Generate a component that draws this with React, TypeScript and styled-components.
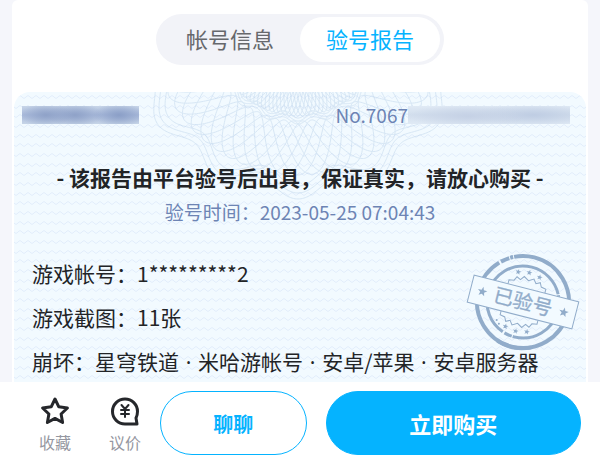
import React from "react";
import styled, { createGlobalStyle } from "styled-components";

const GlobalStyle = createGlobalStyle`
  *, *::before, *::after { box-sizing: border-box; }
  body {
    margin: 0;
    background: #f5f6fb;
    color: #222427;
    font-family: "Noto Sans CJK SC", sans-serif;
  }
  button { font-family: inherit; cursor: pointer; }
`;

const Page = styled.div`
  min-height: 100vh;
  display: flex;
  flex-direction: column;
`;

const Panel = styled.main`
  flex: 1;
  display: flex;
  flex-direction: column;
  margin: 0 12px;
  padding: 14px 2px 0;
  background: #fff;
  border-radius: 6px 6px 0 0;
`;

const Tabs = styled.div`
  align-self: center;
  display: flex;
  padding: 3px 4px;
  border-radius: 26px;
  background: #f2f3f8;
`;

const Tab = styled.button<{ $active?: boolean }>`
  height: 45px;
  padding: 0 26px 4px;
  border: 0;
  border-radius: 23px;
  font-size: 22px;
  line-height: 32px;
  background: ${(p) => (p.$active ? "#fff" : "transparent")};
  color: ${(p) => (p.$active ? "#05b3ff" : "#66686c")};
`;

const Report = styled.section`
  position: relative;
  flex: 1;
  margin-top: 27px;
  padding: 8px 8px 4px;
  border-radius: 16px 16px 0 0;
  background: #f2faff;
  overflow: hidden;
`;

const Waves = styled.svg`
  position: absolute;
  inset: 0;
  width: 100%;
  height: 100%;
`;

const Rosette = styled.svg`
  position: absolute;
  top: 0;
  left: 50%;
  width: 320px;
  height: 110px;
  transform: translateX(-50%);
`;

const Content = styled.div`
  position: relative;
`;

const Serial = styled.div`
  display: flex;
  align-items: center;
  justify-content: space-between;
  padding-right: 8px;
  height: 30px;
  font-size: 19px;
  line-height: 30px;
  color: #6d84b4;
`;

const SerialNumber = styled.div`
  display: flex;
  align-items: center;
`;

const Mask = styled.span<{ $strong?: boolean }>`
  width: ${(p) => (p.$strong ? 117 : 162)}px;
  height: 18px;
  background: ${(p) =>
    p.$strong
      ? `radial-gradient(ellipse 26px 12px at 24px 9px, #8fa2c8, transparent),
         radial-gradient(ellipse 28px 12px at 53px 9px, #8fa2c8, transparent),
         radial-gradient(ellipse 26px 12px at 97px 9px, #8b9fc7, transparent),
         linear-gradient(#c7d5e8, #a9badb 50%, #c7d5e8)`
      : `radial-gradient(ellipse 60px 12px at 60px 10px, #c5d1e5, transparent),
         radial-gradient(ellipse 60px 12px at 125px 9px, #bfcde3, transparent),
         linear-gradient(#e0eaf5, #d2deed 50%, #e0eaf5)`};
`;

const Title = styled.h1`
  margin: 32px 0 0;
  font-size: 21px;
  line-height: 30px;
  font-weight: 700;
  text-align: center;
`;

const CheckedAt = styled.p`
  margin: 5px 0 0;
  font-size: 19px;
  line-height: 30px;
  text-align: center;
  color: #6d84b4;
`;

const Facts = styled.dl`
  display: flex;
  flex-direction: column;
  gap: 12px;
  margin: 30px 0 0;
  padding: 0 10px;
`;

const Fact = styled.div`
  display: flex;
  font-size: 21px;
  line-height: 32px;
  white-space: nowrap;
  dt, dd { margin: 0; }
`;

const Dot = styled.span`
  padding: 0 2px;
  font-family: "Noto Sans", sans-serif;
  line-height: 1;
`;

const Stamp = styled.svg`
  position: absolute;
  top: 157px;
  right: 3px;
  width: 120px;
  height: 106px;
`;

const Bar = styled.footer`
  position: sticky;
  bottom: 0;
  display: flex;
  align-items: center;
  padding: 9px 19px 7px 20px;
  background: #fff;
`;

const Tool = styled.button`
  display: flex;
  flex-direction: column;
  align-items: center;
  gap: 4px;
  width: 70px;
  padding: 4px 0 0;
  border: 0;
  background: transparent;
  color: #9597a1;
  font-size: 16px;
  line-height: 24px;
  svg { display: block; color: #25272b; }
`;

const Action = styled.button<{ $primary?: boolean }>`
  flex: ${(p) => (p.$primary ? 256 : 146)} 1 0;
  height: 64px;
  margin-left: ${(p) => (p.$primary ? 19 : 0)}px;
  padding: 0;
  border: 1px solid #05b3ff;
  border-radius: 32px;
  font-size: ${(p) => (p.$primary ? 22 : 20)}px;
  font-weight: 700;
  background: ${(p) => (p.$primary ? "#05b3ff" : "#fff")};
  color: ${(p) => (p.$primary ? "#fff" : "#05b3ff")};
`;

/* Polar curve r = radius + amp * cos(freq * t + phase), t measured from straight down. */
function polar(radius: number, amp: number, freq: number, phase = 0) {
  const points: string[] = [];
  for (let deg = -80; deg <= 80; deg += 0.5) {
    const t = (deg * Math.PI) / 180;
    const r = radius + amp * Math.cos(freq * t + phase);
    points.push(`${(158 + r * Math.sin(t)).toFixed(1)} ${(-62 + r * Math.cos(t)).toFixed(1)}`);
  }
  return "M" + points.join("L");
}

const range = (n: number) => Array.from({ length: n }, (_, i) => i);
const rosettePaths = [
  ...[161, 155, 148].map((r) => polar(r, 8, 12.8)),
  ...[91, 88, 85].map((r) => polar(r, 3, 19)),
  ...range(7).map((i) => polar(118, 27, 9, (i * 2 * Math.PI) / 7)),
  ...range(8).map((i) => polar(68, 18, 15, (i * 2 * Math.PI) / 8)),
];

function star(cx: number, cy: number, outer: number, inner = outer * 0.42) {
  return (
    range(10)
      .map((i) => {
        const r = i % 2 ? inner : outer;
        const a = (i * Math.PI) / 5;
        return `${i ? "L" : "M"}${(cx + r * Math.sin(a)).toFixed(1)} ${(cy - r * Math.cos(a)).toFixed(1)}`;
      })
      .join("") + "Z"
  );
}

function VerifiedStamp() {
  return (
    <Stamp viewBox="0 0 120 106" role="img" aria-label="已验号">
      <g transform="rotate(14.3 60 53)" fill="none" stroke="#91acca">
        <circle cx="60" cy="53" r="46" strokeWidth="4" strokeDasharray="180 2 9 1 3 1 93" />
        <path d="M45 97Q62 103 79 95" strokeWidth="4" />
        <circle cx="60" cy="53" r="36" strokeWidth="3" strokeDasharray="58 1 8 2 140 1 16" />
        <path
          d="M41 39v-4l5-1 2-4 4 2 3-4 5 3 5-3 3 4 4-2 2 4 5 1v4M41 67v4l5 1 2 4 4-2 3 4 5-3 5 3 3-4 4 2 2-4 5-1v-4"
          strokeWidth="1"
        />
        <g fill="#91acca" stroke="none">
          <path d={star(48, 25, 3)} />
          <path d={star(59, 23, 3)} />
          <path d={star(70, 25, 3)} />
          <path d={star(49, 81, 3)} />
          <path d={star(60, 83, 3)} />
          <path d={star(71, 81, 3)} />
          <circle cx="39" cy="77" r="1" />
          <circle cx="42" cy="80" r="1" />
        </g>
        <path d="M6 39h108v28H6z" fill="#f2faff" strokeWidth="1" />
        <g fill="#91acca" stroke="none">
          <path d={star(18, 53, 5)} />
          <path d={star(102, 53, 5)} />
          <text x="60" y="60" textAnchor="middle" fontSize="20" fontWeight="400" stroke="#91acca" strokeWidth="0.3">
            已验号
          </text>
        </g>
      </g>
    </Stamp>
  );
}

const facts = [
  { label: "游戏帐号：", values: ["1*********2"] },
  { label: "游戏截图：", values: ["11张"] },
  { label: "崩坏：", values: ["星穹铁道", "米哈游帐号", "安卓/苹果", "安卓服务器"] },
];

export default function App() {
  return (
    <Page>
      <GlobalStyle />
      <Panel>
        <Tabs role="tablist">
          <Tab role="tab" aria-selected={false}>帐号信息</Tab>
          <Tab role="tab" aria-selected $active>验号报告</Tab>
        </Tabs>
        <Report>
          <Waves aria-hidden="true">
            <defs>
              <pattern id="waves" width="8" height="29" patternUnits="userSpaceOnUse">
                <path
                  d="M-4 5q2 -3 4 0t4 0t4 0t4 0M-4 15q2 -3 4 0t4 0t4 0t4 0M-4 24q2 -3 4 0t4 0t4 0t4 0"
                  fill="none"
                  stroke="#e2edfb"
                  strokeWidth="1"
                />
              </pattern>
            </defs>
            <rect width="100%" height="100%" fill="url(#waves)" />
          </Waves>
          <Rosette viewBox="0 0 320 110" aria-hidden="true">
            <g fill="none" stroke="#a9c6e4" strokeWidth="1" opacity="0.36">
              {rosettePaths.map((d) => (
                <path key={d} d={d} />
              ))}
            </g>
          </Rosette>
          <VerifiedStamp />
          <Content>
            <Serial>
              <Mask $strong />
              <SerialNumber>
                No.7067
                <Mask />
              </SerialNumber>
            </Serial>
            <Title>- 该报告由平台验号后出具，保证真实，请放心购买 -</Title>
            <CheckedAt>验号时间：2023-05-25 07:04:43</CheckedAt>
            <Facts>
              {facts.map(({ label, values }) => (
                <Fact key={label}>
                  <dt>{label}</dt>
                  <dd>
                    {values.map((value, i) => (
                      <React.Fragment key={value}>
                        {i > 0 && <> <Dot>·</Dot> </>}
                        {value}
                      </React.Fragment>
                    ))}
                  </dd>
                </Fact>
              ))}
            </Facts>
          </Content>
        </Report>
      </Panel>
      <Bar>
        <Tool>
          <svg width="30" height="30" viewBox="0 0 30 30" fill="none" stroke="currentColor" strokeWidth="3" strokeLinejoin="round">
            <path d={star(15, 16, 13, 6.4)} />
          </svg>
          收藏
        </Tool>
        <Tool>
          <svg width="30" height="30" viewBox="0 0 30 30" fill="none" stroke="currentColor" strokeWidth="3" strokeLinecap="round" strokeLinejoin="round">
            <path d="M15 28A12.5 12.5 0 1 1 27.500 15.500Q27.500 19 26 22L27 28Z" />
            <path d="M11.500 9l3.500 4 3.500-4M11 14h8M11 18h8M15 13v8" strokeWidth="2" />
          </svg>
          议价
        </Tool>
        <Action>聊聊</Action>
        <Action $primary>立即购买</Action>
      </Bar>
    </Page>
  );
}
